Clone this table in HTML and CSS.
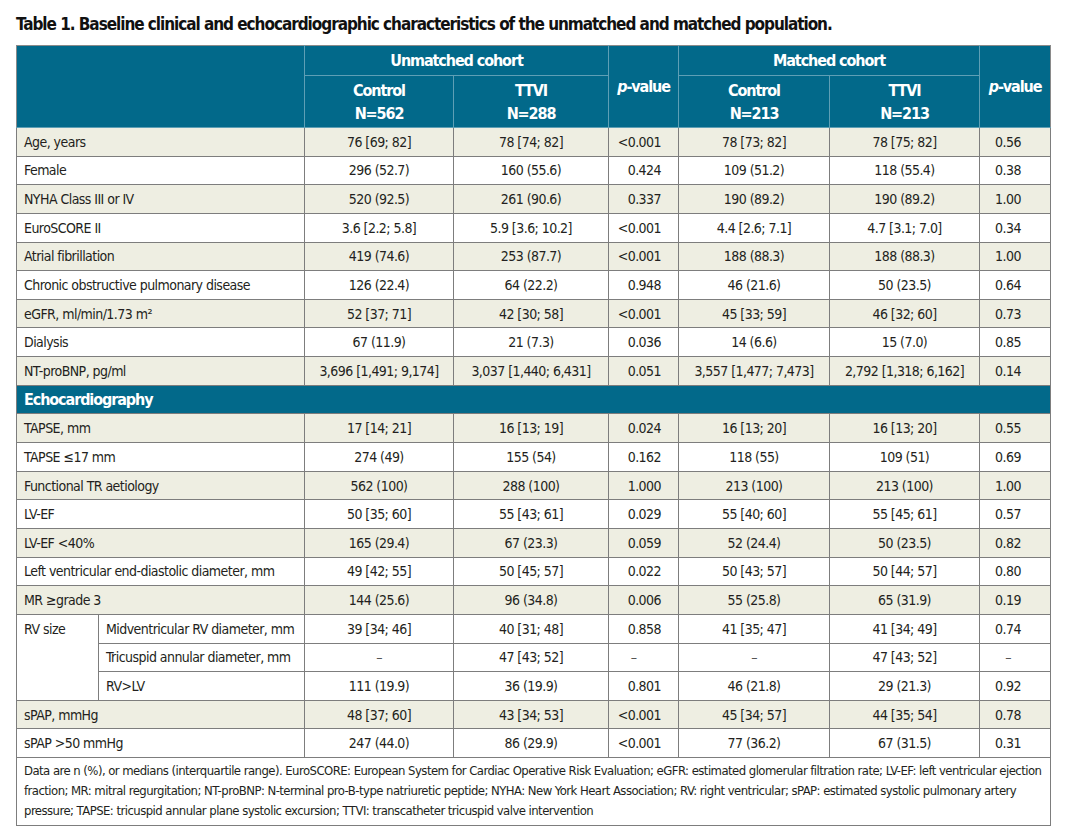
FILE: index.html
```html
<!DOCTYPE html>
<html>
<head>
<meta charset="utf-8">
<link rel="stylesheet" href="styles.css">
</head>
<body>
<div class="page">
<h1 class="title">Table 1. Baseline clinical and echocardiographic characteristics of the unmatched and matched population.</h1>
<table class="tbl">
<colgroup>
<col class="c-sub"><col class="c-lab"><col class="c-v1"><col class="c-v2"><col class="c-p"><col class="c-v3"><col class="c-v4"><col class="c-p2">
</colgroup>
<thead>
<tr class="h1">
<th colspan="2" rowspan="2"></th>
<th colspan="2" class="grp">Unmatched cohort</th>
<th rowspan="2"><i>p</i>-value</th>
<th colspan="2" class="grp">Matched cohort</th>
<th rowspan="2"><i>p</i>-value</th>
</tr>
<tr class="h2">
<th>Control<br>N=562</th>
<th>TTVI<br>N=288</th>
<th>Control<br>N=213</th>
<th>TTVI<br>N=213</th>
</tr>
</thead>
<tbody>
<tr class="alt"><td colspan="2" class="lab">Age, years</td><td>76 [69; 82]</td><td>78 [74; 82]</td><td class="pv">&lt;0.001</td><td>78 [73; 82]</td><td>78 [75; 82]</td><td class="pv2">0.56</td></tr>
<tr><td colspan="2" class="lab">Female</td><td>296 (52.7)</td><td>160 (55.6)</td><td class="pv">0.424</td><td>109 (51.2)</td><td>118 (55.4)</td><td class="pv2">0.38</td></tr>
<tr class="alt"><td colspan="2" class="lab">NYHA Class III or IV</td><td>520 (92.5)</td><td>261 (90.6)</td><td class="pv">0.337</td><td>190 (89.2)</td><td>190 (89.2)</td><td class="pv2">1.00</td></tr>
<tr><td colspan="2" class="lab">EuroSCORE II</td><td>3.6 [2.2; 5.8]</td><td>5.9 [3.6; 10.2]</td><td class="pv">&lt;0.001</td><td>4.4 [2.6; 7.1]</td><td>4.7 [3.1; 7.0]</td><td class="pv2">0.34</td></tr>
<tr class="alt"><td colspan="2" class="lab">Atrial fibrillation</td><td>419 (74.6)</td><td>253 (87.7)</td><td class="pv">&lt;0.001</td><td>188 (88.3)</td><td>188 (88.3)</td><td class="pv2">1.00</td></tr>
<tr><td colspan="2" class="lab">Chronic obstructive pulmonary disease</td><td>126 (22.4)</td><td>64 (22.2)</td><td class="pv">0.948</td><td>46 (21.6)</td><td>50 (23.5)</td><td class="pv2">0.64</td></tr>
<tr class="alt"><td colspan="2" class="lab">eGFR, ml/min/1.73 m²</td><td>52 [37; 71]</td><td>42 [30; 58]</td><td class="pv">&lt;0.001</td><td>45 [33; 59]</td><td>46 [32; 60]</td><td class="pv2">0.73</td></tr>
<tr><td colspan="2" class="lab">Dialysis</td><td>67 (11.9)</td><td>21 (7.3)</td><td class="pv">0.036</td><td>14 (6.6)</td><td>15 (7.0)</td><td class="pv2">0.85</td></tr>
<tr class="alt"><td colspan="2" class="lab">NT-proBNP, pg/ml</td><td>3,696 [1,491; 9,174]</td><td>3,037 [1,440; 6,431]</td><td class="pv">0.051</td><td>3,557 [1,477; 7,473]</td><td>2,792 [1,318; 6,162]</td><td class="pv2">0.14</td></tr>
<tr class="sec"><td colspan="8">Echocardiography</td></tr>
<tr class="alt"><td colspan="2" class="lab">TAPSE, mm</td><td>17 [14; 21]</td><td>16 [13; 19]</td><td class="pv">0.024</td><td>16 [13; 20]</td><td>16 [13; 20]</td><td class="pv2">0.55</td></tr>
<tr><td colspan="2" class="lab">TAPSE ≤17 mm</td><td>274 (49)</td><td>155 (54)</td><td class="pv">0.162</td><td>118 (55)</td><td>109 (51)</td><td class="pv2">0.69</td></tr>
<tr class="alt"><td colspan="2" class="lab">Functional TR aetiology</td><td>562 (100)</td><td>288 (100)</td><td class="pv">1.000</td><td>213 (100)</td><td>213 (100)</td><td class="pv2">1.00</td></tr>
<tr><td colspan="2" class="lab">LV-EF</td><td>50 [35; 60]</td><td>55 [43; 61]</td><td class="pv">0.029</td><td>55 [40; 60]</td><td>55 [45; 61]</td><td class="pv2">0.57</td></tr>
<tr class="alt"><td colspan="2" class="lab">LV-EF &lt;40%</td><td>165 (29.4)</td><td>67 (23.3)</td><td class="pv">0.059</td><td>52 (24.4)</td><td>50 (23.5)</td><td class="pv2">0.82</td></tr>
<tr><td colspan="2" class="lab">Left ventricular end-diastolic diameter, mm</td><td>49 [42; 55]</td><td>50 [45; 57]</td><td class="pv">0.022</td><td>50 [43; 57]</td><td>50 [44; 57]</td><td class="pv2">0.80</td></tr>
<tr class="alt"><td colspan="2" class="lab">MR ≥grade 3</td><td>144 (25.6)</td><td>96 (34.8)</td><td class="pv">0.006</td><td>55 (25.8)</td><td>65 (31.9)</td><td class="pv2">0.19</td></tr>
<tr><td rowspan="3" class="lab top">RV size</td><td class="lab">Midventricular RV diameter, mm</td><td>39 [34; 46]</td><td>40 [31; 48]</td><td class="pv">0.858</td><td>41 [35; 47]</td><td>41 [34; 49]</td><td class="pv2">0.74</td></tr>
<tr><td class="lab">Tricuspid annular diameter, mm</td><td class="dash">–</td><td>47 [43; 52]</td><td class="pvd dash">–</td><td class="dash">–</td><td>47 [43; 52]</td><td class="pv2 dash">–</td></tr>
<tr><td class="lab">RV&gt;LV</td><td>111 (19.9)</td><td>36 (19.9)</td><td class="pv">0.801</td><td>46 (21.8)</td><td>29 (21.3)</td><td class="pv2">0.92</td></tr>
<tr class="alt"><td colspan="2" class="lab">sPAP, mmHg</td><td>48 [37; 60]</td><td>43 [34; 53]</td><td class="pv">&lt;0.001</td><td>45 [34; 57]</td><td>44 [35; 54]</td><td class="pv2">0.78</td></tr>
<tr><td colspan="2" class="lab">sPAP &gt;50 mmHg</td><td>247 (44.0)</td><td>86 (29.9)</td><td class="pv">&lt;0.001</td><td>77 (36.2)</td><td>67 (31.5)</td><td class="pv2">0.31</td></tr>
</tbody>
<tfoot>
<tr><td colspan="8" class="note">Data are n (%), or medians (interquartile range). EuroSCORE: European System for Cardiac Operative Risk Evaluation; eGFR: estimated glomerular filtration rate; LV-EF: left ventricular ejection fraction; MR: mitral regurgitation; NT-proBNP: N-terminal pro-B-type natriuretic peptide; NYHA: New York Heart Association; RV: right ventricular; sPAP: estimated systolic pulmonary artery pressure; TAPSE: tricuspid annular plane systolic excursion; TTVI: transcatheter tricuspid valve intervention</td></tr>
</tfoot>
</table>
</div>
</body>
</html>
```
FILE: styles.css
```css
html, body {
  margin: 0;
  background: #ffffff;
}
body {
  font-family: "DejaVu Sans Condensed", "Liberation Sans", sans-serif;
  color: #231f20;
}
.page {
  padding: 13px 16px 0 16px;
}
.title {
  margin: 0 0 9px 0;
  font-size: 17px;
  line-height: 23px;
  letter-spacing: -1.05px;
  font-weight: bold;
  color: #111;
}
.tbl {
  width: 1034px;
  border-collapse: collapse;
  table-layout: fixed;
  font-size: 14px;
  letter-spacing: -0.55px;
}
.c-sub { width: 82px; }
.c-lab { width: 206px; }
.c-v1 { width: 149px; }
.c-v2 { width: 155px; }
.c-p { width: 70px; }
.c-v3 { width: 151px; }
.c-v4 { width: 150px; }
.c-p2 { width: 71px; }
.tbl th {
  background: #02698a;
  color: #ffffff;
  font-weight: bold;
  font-size: 16px;
  letter-spacing: -1.1px;
  line-height: 23px;
  border: 1px solid #5e9fb5;
  padding: 0;
}
.tbl thead tr.h1 th { height: 29px; border-top-color: #8a8a8a; }
.tbl thead tr.h2 th { height: 51px; }
.tbl thead tr.h1 th:first-child { border-left-color: #8a8a8a; }
.tbl thead tr.h1 th:last-child { border-right-color: #8a8a8a; }
.tbl td {
  border: 1px solid #7d7d7d;
  height: 27.65px;
  padding: 0 6px;
  text-align: center;
  line-height: 18px;
  white-space: nowrap;
}
.tbl td.lab { text-align: left; padding-left: 7px; }
.tbl td.top { vertical-align: top; padding-top: 5px; }
.tbl td.pv { text-align: right; padding-right: 17px; }
.tbl td.pvd { padding-left: 0; padding-right: 20px; }
.tbl td.pv2 { padding-left: 0; padding-right: 14px; }
.tbl td.dash { color: #555; }
.tbl tr.alt td { background: #eeeee2; }
.tbl tr.sec td {
  background: #02698a;
  color: #ffffff;
  font-weight: bold;
  font-size: 16px;
  letter-spacing: -1.1px;
  text-align: left;
  padding-left: 7px;
}
.tbl td.note {
  text-align: left;
  white-space: normal;
  font-size: 13px;
  letter-spacing: -0.55px;
  line-height: 20px;
  padding: 3px 7px 4px 7px;
  height: auto;
}
```
